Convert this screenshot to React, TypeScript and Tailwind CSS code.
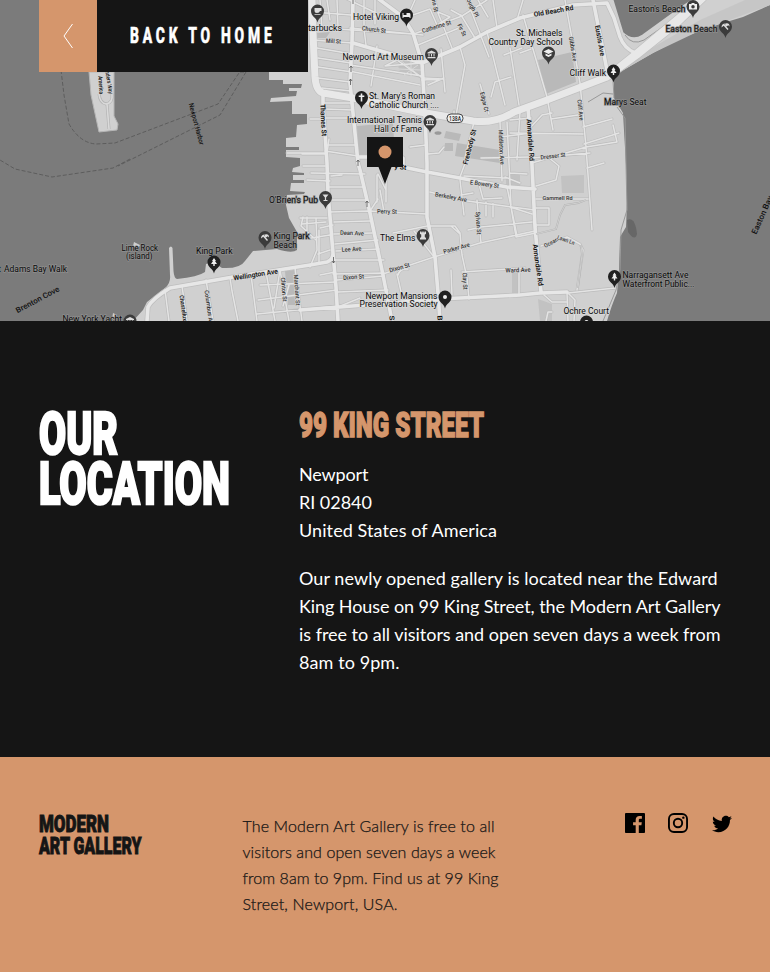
import { useLayoutEffect, useRef, useState } from "react";

type FitProps = { children: string; width: number; mode?: "track" | "squeeze"; className?: string };

/* A single line of text set to an exact measure, by tracking or by condensing. */
function FitLine({ children, width, mode = "track", className = "" }: FitProps) {
  const ref = useRef<HTMLSpanElement>(null);
  const [style, setStyle] = useState<React.CSSProperties>({});
  useLayoutEffect(() => {
    const natural = ref.current!.getBoundingClientRect().width;
    setStyle(
      mode === "track"
        ? { letterSpacing: `${(width - natural) / (children.length - 1)}px` }
        : { transform: `scaleX(${width / natural})` },
    );
  }, [children, width, mode]);
  return (
    <span className={`block w-0 whitespace-nowrap ${className}`}>
      <span ref={ref} className="inline-block origin-left whitespace-nowrap" style={style}>
        {children}
      </span>
    </span>
  );
}

const MAJOR = [
  "M312 0L313 33L315 77Q316 91 323 93L353 98L420 112L473 121Q495 124 514 112L547 100L607 77L637 55L677 23L703 -2",
  "M607 77L637 53L680 17L700 0",
];

const MEDIUM = [
  "M323 96L323 103L327 163L328 193L333 253L336 287L338 321",
  "M353 0L352 43L350 83L353 113L358 163L360 170L370 213L382 270L392 321",
  "M376 -3L403 17L413 33L422 63L425 113L427 163L427 217L435 257L438 293L440 321",
  "M422 63L460 47L487 32L520 18L573 5L607 3L614 18L620 37Q624 48 635 53",
  "M147 321L148 307Q152 299 170 288L233 277L310 265L327 262Q333 260 333 253",
  "M300 310L340 307L440 299L520 295L540 293L567 292",
  "M528 107L532 165L535 227L541 292",
  "M353 43L422 63",
  "M403 167L427 172L460 178L507 187L535 189",
  "M593 0L607 70",
  "M358 157L368 157M403 167L403 158",
];

const MINOR = [
  "M523 15L547 97L553 130", "M565 0L580 83L586 147L592 230", "M510 133L583 134", "M551 119L578 115",
  "M583 127L612 119M584 144L619 133M613 125L617 142", "M532 163L586 147M587 168L604 163",
  "M532 158L590 153", "M548 157L559 166L556 180L536 186M536 199L588 199", "M536 208L549 208L549 225L536 225",
  "M510 207L532 214M511 207L516 237L536 233", "M567 292L568 321M567 292L575 300L574 321M544 295L552 302L566 302",
  "M546 321L548 312L552 312", "M568 293L615 288", "M577 290L583 250L580 244L567 237L550 243L541 246",
  "M320 0L322 28L413 34M327 0L330 20M337 0L338 27M364 0L364 28M364 29L366 45M375 0L375 24M313 40L352 43",
  "M345 -2L374 12M313 12L376 17M350 28L423 35M406 20L415 0M410 16L430 9L437 25L450 17L433 10",
  "M435 0L438 13L452 48M414 34L462 16L487 0M418 45L459 28M423 78L443 79M460 47L465 65L458 104L456 116M467 0L489 57M487 32L505 105M461 15L475 38M451 10L462 16",
  "M441 49L445 92M422 80L443 79M504 55L522 48M510 48L519 105M491 97L495 82L511 77",
  "M317 48L352 54M318 58L351 63M318 67L352 72M318 78L350 82M322 88L351 91M377 46L371 86M350 65L422 76M349 71L420 85M422 63L385 66L397 60L421 77",
  "M324 103L353 103M324 109L353 110M324 118L355 118M310 119L324 119M327 145L355 145M302 154L327 154L329 139M287 153L327 153M325 151L358 156M410 147L426 145M428 154L439 153",
  "M303 166L325 166M311 173L365 174M307 180L330 181M331 176L342 175M329 187L364 187M325 200L365 200M329 212L369 211L427 214M334 222L370 221M334 234L372 233M335 244L378 240M336 251L379 249M335 260L384 260M333 274L384 273M320 275L335 272M337 280L384 276M338 292L388 290M338 307L360 298",
  "M378 174L386 190M377 175L377 202M370 211L378 199M380 190L384 212M386 174L386 202",
  "M393 233L427 226L455 226L460 233L462 255L467 278L469 299M462 272L525 268M460 234L451 226M434 257L383 274M434 257L480 243L535 231M434 257L414 231",
  "M430 192L460 200L535 210M460 180L464 215M464 176L508 178M479 184L483 199L502 198M477 200L481 243M468 230L481 227L532 222M461 195L473 193M486 202L486 216M493 204L493 217M507 187L517 236M510 173L527 174M505 177L520 183",
  "M397 274L402 296M398 275Q400 268 408 269M451 270L452 295M519 269L519 295M465 158L474 122M500 122L502 181M460 177L467 158M500 137L531 133M510 120L531 118M454 111L454 122M480 84L489 114M481 158L530 157",
  "M165 290L169 321M182 286L187 321M206 280L213 321M230 278L232 291L238 321M251 275L257 321M266 272L275 321M280 270L289 321M295 268L302 321M257 314L338 306M258 300L337 290M260 285L336 282M283 306L289 285M274 308L280 270",
  "M300 218L327 218M302 224L326 222M307 217L307 236M316 218L317 250L310 267M303 217L301 226L316 240M318 254L330 250M320 228L333 225M319 230L319 262M311 238L330 235",
  "M520 53L531 49M523 0L517 20M493 0L497 28M478 0L488 17M507 122L511 205M520 112L517 160",
  "M586 147L617 142M529 129L542 115L552 113M428 85L444 78M439 153L444 147",
];

const BOUNDARY = [
  "M61 70L64 95L69 124Q80 143 96 144L115 143L218 104L241 70",
  "M240 72L246 72L220 115L118 166",
  "M130 159L113 168L52 177L15 169L0 160",
];

type Pin = { x: number; y: number; icon?: string; dark?: boolean };
const PINS: Pin[] = [
  { x: 317.5, y: 12, icon: "cup" }, { x: 406.5, y: 16, icon: "bed", dark: true }, { x: 431.5, y: 55.5, icon: "museum" },
  { x: 361.5, y: 98.5, icon: "cross", dark: true }, { x: 430, y: 122.5, icon: "museum" }, { x: 548.5, y: 54, icon: "school" },
  { x: 613.5, y: 72, icon: "tree", dark: true }, { x: 693, y: 7.5, icon: "camera" }, { x: 725.5, y: 27.5, icon: "beach" },
  { x: 325.5, y: 198.5, icon: "drink" }, { x: 265, y: 238.5, icon: "beach" }, { x: 214, y: 263, icon: "tree", dark: true },
  { x: 423, y: 236.500, icon: "tower" }, { x: 445, y: 298, icon: "dot", dark: true }, { x: 614.5, y: 277.5, icon: "tree", dark: true },
  { x: 130, y: 322, icon: "museum" }, { x: 586.5, y: 323, icon: "dot", dark: true },
];

function Glyph({ icon }: { icon?: string }) {
  switch (icon) {
    case "tree": return <path d="M0-4L2-1H1L3 2H.7V4H-.7V2H-3L-1-1H-2Z" fill="#eee" />;
    case "cross": return <path d="M-.8-4H.8V-2H2.8V-.5H.8V4H-.8V-.5H-2.8V-2H-.8Z" fill="#eee" />;
    case "bed": return <path d="M-4-2H-3V0H0V-2H3Q4-2 4 0V3H3V2H-3V3H-4Z" fill="#eee" />;
    case "cup": return <path d="M-3-3H4V0H2.5Q2 2-.5 2Q-3 2-3-.5ZM-3 3H3V3.700H-3Z" fill="#ddd" />;
    case "museum": return <path d="M0-4L4-2V-1H-4V-2ZM-3-.5H-2V2H-3ZM-.5-.5H.5V2H-.5ZM2-.5H3V2H2ZM-4 2.500H4V3.700H-4Z" fill="#ddd" />;
    case "school": return <path d="M0-4L5-1.500L0 1L-5-1.500ZM-3 .5L0 2L3 .5V2.500L0 4L-3 2.500Z" fill="#eee" />;
    case "camera": return <path fillRule="evenodd" d="M-4-2.500H-2L-1-3.500H1L2-2.500H4V3H-4ZM0-1.500A1.700 1.700 0 1 0 0 2A1.700 1.700 0 0 0 0-1.500Z" fill="#eee" />;
    case "drink": return <path d="M-3-3H3L.6 0V2.500H2V3.500H-2V2.500H-.6V0Z" fill="#ddd" />;
    case "beach": return <path d="M-4 1Q-4-3 0-3L-1-2L3 2.500L2 3.500L-1.800-.8ZM0-3Q4-4 4 0L2.700-1.200L1 0L-.5-1.500Z" fill="#ddd" />;
    case "tower": return <path d="M-3-4H-1.500V-3H-.7V-4H.7V-3H1.500V-4H3V-1.500L1.800-1V1.500L3 2.500V4H-3V2.500L-1.800 1.500V-1L-3-1.500Z" fill="#ddd" />;
    default: return <circle r="2" fill="#eee" />;
  }
}

/* text, x, baseline y, width */
type Place = [string, number, number, number];
const PLACES: Place[] = [
  ["tarbucks", 308, 31, 34], ["Hotel Viking", 353, 20, 46], ["Newport Art Museum", 342.5, 60, 81.5],
  ["St. Mary's Roman", 369, 99, 66], ["Catholic Church :...", 369, 107.5, 70],
  ["International Tennis", 347, 123, 75], ["Hall of Fame", 374, 131.5, 48],
  ["St. Michaels", 516, 36, 46.5], ["Country Day School", 488.5, 44.5, 74], ["Cliff Walk", 569.5, 76, 36.5],
  ["Easton's Beach", 628.5, 12, 57], ["Easton Beach", 665.5, 32, 52], ["Marys Seat", 604, 105, 42.5],
  ["O'Brien's Pub", 269, 202.5, 49], ["King Park", 273.5, 239, 36], ["Beach", 273.5, 247.5, 23.5],
  ["The Elms", 380, 241, 35.5], ["Newport Mansions", 365.5, 298.5, 72], ["Preservation Society", 359.5, 307, 78],
  ["King Park", 196, 253.5, 36.5], ["Lime Rock", 121.5, 250.5, 36.5], ["(island)", 126, 259, 26.5],
  ["Adams Bay Walk", 4, 272, 63], ["New York Yacht", 62.5, 322, 59.5],
  ["Narragansett Ave", 622.5, 278, 66], ["Waterfront Public...", 622.5, 286.5, 72], ["Ochre Court", 563.5, 314, 45.5],
];

/* text, centre x, centre y, rotation, width, size, heavy */
type Street = [string, number, number, number, number, number, boolean?];
const STREETS: Street[] = [
  ["Church St", 374, 29.5, 7, 24, 6.5], ["Mill St", 333.5, 41, 4, 15, 6.2], ["Catherine St", 436.5, 26.5, -17, 30, 6.2],
  ["Fir St", 462, 30, 65, 13, 6], ["rough Pl", 472.5, 7, 62, 22, 6], ["ins St", 435, 5, 78, 14, 6],
  ["Old Beach Rd", 553.5, 11, -10, 40, 6.8, true], ["Gibbs Ave", 573, 49, 80, 25, 6], ["Eustis Ave", 600, 40.5, 80, 31, 7, true],
  ["Cliff Ave", 580.5, 110, 84, 21, 6], ["Annandale Rd", 530.5, 140, 86, 42, 7, true], ["Annandale Rd", 538, 265, 82, 42, 7, true],
  ["Dresser St", 553, 156, -7, 25, 6], ["Gammell Rd", 557.5, 198, 0, 30, 6], ["Middleton Ave", 501.5, 147, 87, 35, 6],
  ["Freebody St", 469.5, 147, -76, 36, 7, true], ["Edgar Ct", 484.5, 102, 76, 20, 6], ["Thames St", 323.5, 120, 87, 32, 7, true],
  ["E Bowery St", 484.5, 184, 8, 29, 6.2], ["Berkeley Ave", 451, 197, 10, 32, 6.2], ["Sylvan St", 478.5, 223, 87, 23, 6.2],
  ["Parker Ave", 456.5, 248, -16, 27, 6.2], ["Perry St", 387, 211.5, 1, 20, 6.2], ["Dean Ave", 352, 233, 2, 24, 6.2],
  ["Lee Ave", 351.5, 249, -4, 20, 6.2], ["Dixon St", 399.5, 267.5, -16, 21, 6.2], ["Dixon St", 353.5, 277, -4, 21, 6.2],
  ["Clay St", 465, 281, 87, 17, 6.2], ["Ward Ave", 518, 270, -2, 25, 6.2], ["Wellington Ave", 255.5, 274.5, -9, 45, 7, true],
  ["Clinton St", 284, 289.5, 85, 24, 6], ["Marchant St", 297, 290, 86, 31, 6], ["Columbus Av", 209, 307, 82, 34, 6],
  ["Chastellux", 183.5, 308, 82, 26, 6], ["y St", 400.5, 167, 6, 12, 7, true],
  ["Ocean", 551, 242.5, -28, 15, 6], ["Lawn Ln", 566, 240, 20, 18, 6],
  ["Newport Harbor", 196.5, 124, 75, 43, 6.8], ["Brenton Cove", 37.5, 299.5, -28, 48, 7.7], ["Easton Bay", 762, 215, -66, 41, 8],
  ["S", 392, 318, 85, 5, 7, true], ["B", 440, 318, 85, 5, 7, true], ["America", 101, 85, 86, 18, 6], ["anders Way", 109, 81, 80, 26, 5.8],
];

function Arrow({ x, y, down = false }: { x: number; y: number; down?: boolean }) {
  return <path d={down ? "M0-3V3M-1.500 1L0 3L1.500 1" : "M0 3V-3M-1.500-1L0-3L1.500-1"} transform={`translate(${x} ${y})`} stroke="#555" strokeWidth="0.8" fill="none" />;
}

function Roads({ paths, width, color }: { paths: string[]; width: number; color: string }) {
  return <path d={paths.join("")} fill="none" stroke={color} strokeWidth={width} strokeLinejoin="round" strokeLinecap="round" />;
}

function Map() {
  return (
    <svg className="block h-full w-full" viewBox="0 0 770 321" fontFamily="Roboto, 'Liberation Sans', sans-serif">
      <rect width="770" height="321" fill="#7b7b7b" />
      <path
        fill="#d0d0d0"
        d="M269 0L269 80L283 80V84H302L301 88H289V91H297L296 96L271 98L270 102L292 101V114H307V124L297 125L296 137L286 138V147H299V150H286V157L300 158V166L293 168L292 172L304 173V175H293V180H304V183H291L290 191L305 192L304 194L287 195L286 205L289 218L297 232V250Q292 254 277 249L253 251L245 261Q240 269 222 268L213 262L206 264L205 272Q198 277 177 279Q174 278 173.500 271L172.500 248Q171 245 169 248L170 275Q171 283 165 288L147 302L143 310L133 321H607Q612 304 617 293L619 270L620 237L626 227L627 203L626 165L623 113L614 98V80L620 72L653 53L677 40L697 32L723 23L743 17L770 5V0Z"
      />
      <path d="M612 0L622 33Q632 43 643 36L683 7L694 0Z" fill="#7b7b7b" />
      <path d="M612 0L622 33Q632 43 643 36L683 7L694 0" fill="none" stroke="#d0d0d0" strokeWidth="3" />
      <path d="M89 72L91 95L99 132L117 130L118 124L114 116V72Z" fill="#d0d0d0" stroke="#b5b5b5" strokeWidth="1" />
      <path d="M134 242L140 245L138 249L133 246ZM113 313L117 315L116 320L112 319Z" fill="#cecece" />
      <path d="M627 220Q635 216 637 234Q635 242 628 232Z" fill="#676767" />
      <path d="M620 72L653 53L697 32L770 5V0H745L700 20L640 55Z" fill="#c6c6c6" />
      <path
        fill="#b9b9b9"
        d="M357 126L393 123L395 157L358 156ZM446 131L461 134L459 141L444 138ZM445 143L453 143V151L444 151ZM457 143L500 150V163L455 156ZM285 271L294 270L296 305L288 305ZM317 33L330 32L326 38H317ZM538 60L572 52L576 82L546 94Z"
      />
      <path d="M400 60L420 64L420 78L398 70ZM561 176L584 175V193H562ZM508 175L520 174V186H508ZM512 272H520V294H512ZM538 299L552 304V321H540ZM506 176H511V186H506Z" fill="#c2c2c2" />
      <ellipse cx="438" cy="133" rx="3.500" ry="1.800" fill="#999" />
      <path d="M625 35Q632 46 644 40L684 12M613 80L614 98M617 107L625 118L627 210L621 230L620 270L616 290L603 321M588 102L603 93L613 94" stroke="#999" strokeWidth="1" fill="none" />
      <Roads paths={MINOR} width={2.8} color="#bcbcbc" />
      <Roads paths={MEDIUM} width={5} color="#bebebe" />
      <Roads paths={MAJOR} width={8.4} color="#c0c0c0" />
      <Roads paths={MINOR} width={1.5} color="#e4e4e4" />
      <Roads paths={MEDIUM} width={3.6} color="#e7e7e7" />
      <Roads paths={MAJOR} width={7} color="#e8e8e8" />
      <path d="M400 60L419 75M404 75L418 65M398 69L421 70M411 61V76" stroke="#dedede" strokeWidth=".8" />
      <path d="M536 234L556 229L560 215L565 205L578 203L586 200M581 245L582 255L578 288" stroke="#b1b1b1" strokeWidth="1.800" fill="none" />
      <path d="M536 234L556 229L560 215L565 205L578 203L586 200M581 245L582 255L578 288" stroke="#d8d8d8" strokeWidth=".8" fill="none" />
      <path d="M99 94Q100 103 106 104Q113 103 112 94M107 104L109 129" stroke="#b4b4b4" strokeWidth="3" fill="none" />
      <path d="M99 94Q100 103 106 104Q113 103 112 94M107 104L109 129" stroke="#dadada" strokeWidth="1.600" fill="none" />
      {BOUNDARY.map((d) => <path key={d} d={d} stroke="#595959" strokeWidth="0.9" strokeDasharray="4 2" fill="none" />)}
      <Arrow x={353} y={1} /><Arrow x={351} y={69} /><Arrow x={350.5} y={82} /><Arrow x={358} y={163} />
      <Arrow x={367} y={204} /><Arrow x={333.5} y={260} down />
      <rect x="447" y="114" width="16" height="8.600" rx="4" fill="#f0f0f0" stroke="#333" strokeWidth=".9" />
      <text x="455" y="120.600" textAnchor="middle" fontSize="6.500" fontWeight="500" textLength="12" lengthAdjust="spacingAndGlyphs" fill="#222">138A</text>
      {STREETS.map(([t, x, y, r, w, size, heavy], i) => (
        <text
          key={i} transform={`translate(${x} ${y}) rotate(${r})`} y={size * 0.35} textAnchor="middle" fontSize={size}
          fontWeight={heavy ? 600 : 500} textLength={w} lengthAdjust="spacingAndGlyphs" fill={heavy || x > 740 || x < 200 ? "#101010" : "#333"}
          stroke={x > 740 || x < 280 && y > 285 || x < 200 ? "none" : "#d8d8d8"} strokeWidth="1.300" paintOrder="stroke"
        >
          {t}
        </text>
      ))}
      {PLACES.map(([t, x, y, w], i) => (
        <text
          key={i} x={x} y={y} fontSize="8.500" textLength={w} lengthAdjust="spacingAndGlyphs" fill="#090909"
          stroke={x > 595 || x < 290 ? "#8e8e8e" : "#dadada"} strokeWidth="1.300" paintOrder="stroke"
        >
          {t}
        </text>
      ))}
      <text x="-2" y="272" fontSize="8.500">t</text>
      {PINS.map(({ x, y, icon, dark }, i) => (
        <g key={i} transform={`translate(${x} ${y})`}>
          <path d="M0 10.500C-1 5.500-6.500 4.500-6.500-1A6.500 6.500 0 0 1 6.500-1C6.500 4.500 1 5.500 0 10.500Z" fill={dark ? "#202020" : "#3b3b3b"} />
          <g transform="translate(0 -1)"><Glyph icon={icon} /></g>
        </g>
      ))}
      <path d="M367 137H403V167H391.500L385 184L378.500 167H367Z" fill="#151515" />
      <circle cx="385" cy="152" r="6.500" fill="#d5966c" />
    </svg>
  );
}

const DISPLAY = "font-['Roboto','Liberation_Sans',sans-serif] font-black";

export default function App() {
  return (
    <div className="flex h-[972px] w-[770px] flex-col overflow-hidden bg-[#151515] font-['Lato','Liberation_Sans',sans-serif]">
      <header className="relative h-[321px] shrink-0">
        <Map />
        <a className="absolute left-[39px] top-0 flex h-[72px] w-[269px] bg-[#151515]" href="#">
          <span className="flex w-[58px] items-center justify-center bg-[#d5966c]">
            <svg className="ml-[-1px] h-[26px] w-[12px]" viewBox="0 0 12 26" fill="none" stroke="white" strokeWidth="1">
              <path d="M10.500 1L2 13L10.500 25" />
            </svg>
          </span>
          <span className="flex items-center pl-[33px] text-white">
            <FitLine mode="squeeze" width={145.5} className="font-['Roboto','Liberation_Sans',sans-serif] text-[22px] font-extrabold leading-none tracking-[6px] [-webkit-text-stroke:0.6px]">
              BACK TO HOME
            </FitLine>
          </span>
        </a>
      </header>

      <main className="flex h-[436px] shrink-0 pl-[39px] pt-[84px]">
        <h1 className={`w-[260px] pt-[4px] text-[59.5px] leading-[50px] text-white [-webkit-text-stroke:2.4px] ${DISPLAY}`}>
          <FitLine mode="squeeze" width={79}>OUR</FitLine>
          <FitLine mode="squeeze" width={191}>LOCATION</FitLine>
        </h1>
        <div className="text-lg leading-7 text-white">
          <h2 className={`h-[55px] pt-px text-[34.5px] leading-[38px] text-[#d5966c] [-webkit-text-stroke:1.4px] ${DISPLAY}`}>
            <FitLine mode="squeeze" width={185}>99 KING STREET</FitLine>
          </h2>
          <address className="mb-5 not-italic">
            <FitLine width={69.5}>Newport</FitLine>
            <FitLine width={73}>RI 02840</FitLine>
            <FitLine width={198}>United States of America</FitLine>
          </address>
          <p>
            <FitLine width={418.5}>Our newly opened gallery is located near the Edward</FitLine>
            <FitLine width={421.5}>King House on 99 King Street, the Modern Art Gallery</FitLine>
            <FitLine width={421.5}>is free to all visitors and open seven days a week from</FitLine>
            <FitLine width={100.5}>8am to 9pm.</FitLine>
          </p>
        </div>
      </main>

      <footer className="flex flex-1 bg-[#d5966c] pl-[38px] pr-[37px] pt-14 text-[#151515]">
        <div className={`w-[204px] pl-[0.5px] text-[23.5px] leading-[22px] [-webkit-text-stroke:0.9px] ${DISPLAY}`}>
          <FitLine mode="squeeze" width={70}>MODERN</FitLine>
          <FitLine mode="squeeze" width={102.5}>ART GALLERY</FitLine>
        </div>
        <p className="w-[383px] pl-[0.5px] text-[16px] font-light leading-[26px] [-webkit-text-stroke:0.25px]">
          <FitLine width={252}>The Modern Art Gallery is free to all</FitLine>
          <FitLine width={253}>visitors and open seven days a week</FitLine>
          <FitLine width={256}>from 8am to 9pm. Find us at 99 King</FitLine>
          <FitLine width={155}>Street, Newport, USA.</FitLine>
        </p>
        <div className="flex gap-[23px] text-black">
          <svg className="size-5" viewBox="0 0 20 20" fill="currentColor">
            <path d="M18.896 0H1.104C.494 0 0 .494 0 1.104v17.793C0 19.506.494 20 1.104 20h9.580v-7.745H8.076V9.237h2.606V7.010c0-2.583 1.578-3.990 3.883-3.990 1.104 0 2.052.082 2.329.119v2.700h-1.598c-1.254 0-1.496.597-1.496 1.470v1.928h2.989l-.390 3.018h-2.600V20h5.098c.608 0 1.102-.494 1.102-1.104V1.104C20 .494 19.506 0 18.896 0z" />
          </svg>
          <svg className="size-5" viewBox="0 0 20 20" fill="none" stroke="currentColor" strokeWidth="1.900">
            <rect x=".95" y=".95" width="18.100" height="18.100" rx="5" />
            <circle cx="10" cy="10" r="4.200" />
            <circle cx="15.350" cy="4.650" r="1.200" fill="currentColor" stroke="none" />
          </svg>
          <svg className="ml-px mt-px size-5" viewBox="0 0 24 24" fill="currentColor">
            <path d="M24 4.557c-.883.392-1.832.656-2.828.775 1.017-.609 1.798-1.574 2.165-2.724-.951.564-2.005.974-3.127 1.195-.897-.957-2.178-1.555-3.594-1.555-3.179 0-5.515 2.966-4.797 6.045-4.091-.205-7.719-2.165-10.148-5.144-1.290 2.213-.669 5.108 1.523 6.574-.806-.026-1.566-.247-2.229-.616-.054 2.281 1.581 4.415 3.949 4.890-.693.188-1.452.232-2.224.084.626 1.956 2.444 3.379 4.600 3.419-2.070 1.623-4.678 2.348-7.290 2.040 2.179 1.397 4.768 2.212 7.548 2.212 9.142 0 14.307-7.721 13.995-14.646.962-.695 1.797-1.562 2.457-2.549z" />
          </svg>
        </div>
      </footer>
    </div>
  );
}
